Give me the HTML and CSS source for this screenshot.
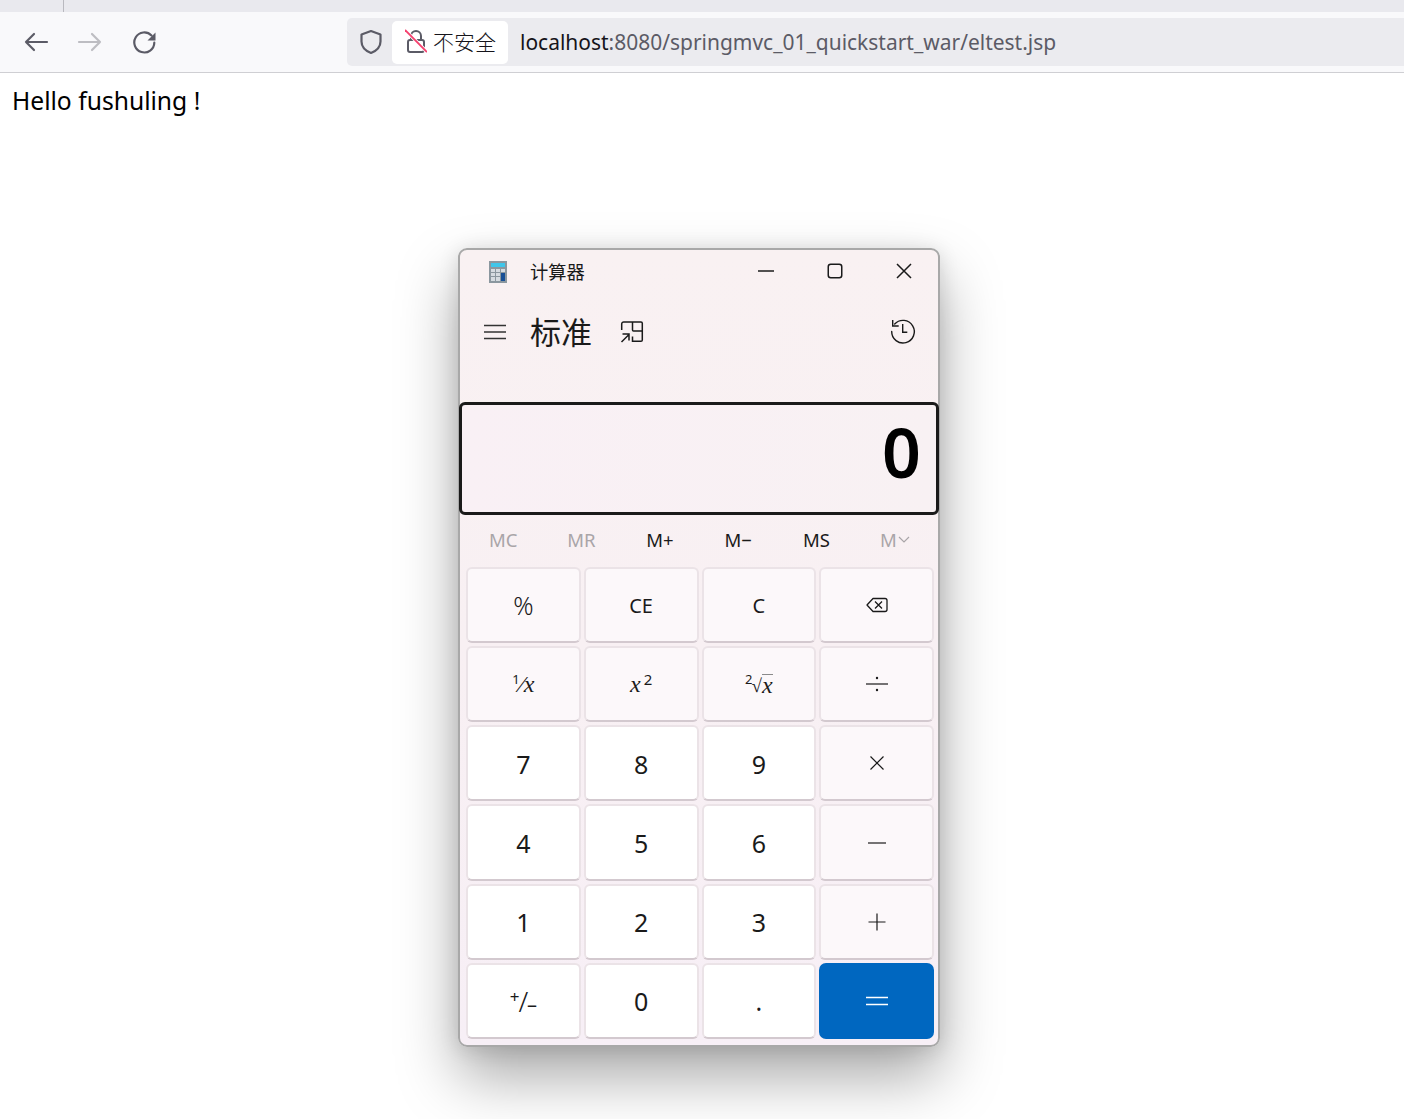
FILE: index.html
```html
<!DOCTYPE html>
<html lang="zh-CN">
<head>
<meta charset="utf-8">
<title>eltest</title>
<link rel="stylesheet" href="styles.css">
</head>
<body>
<div class="tabstrip"><span class="tabsep"></span></div>
<header class="toolbar">
  <nav class="nav">
    <svg class="navicon" viewBox="0 0 26 24"><path d="M24 12H3M11 4l-8 8 8 8" fill="none" stroke="#5b5b66" stroke-width="2.2" stroke-linecap="round" stroke-linejoin="round"/></svg>
    <svg class="navicon" viewBox="0 0 26 24"><path d="M2 12h21M15 4l8 8-8 8" fill="none" stroke="#bdbdc2" stroke-width="2.2" stroke-linecap="round" stroke-linejoin="round"/></svg>
    <svg class="navicon" viewBox="-1 0 26 24"><path d="M19.500 5.500A10 10 0 1 0 22.300 12.700" fill="none" stroke="#5b5b66" stroke-width="2.200" stroke-linecap="round"/><path d="M23.500 2.500V10.500H15.500z" fill="#5b5b66"/></svg>
  </nav>
  <div class="urlbar">
    <svg class="shield" viewBox="0 0 24 26"><path d="M12 2l9.500 3.500v7c0 6-4.500 9.500-9.500 11.500-5-2-9.500-5.500-9.500-11.500v-7z" fill="none" stroke="#5b5b66" stroke-width="2.200" stroke-linejoin="round"/></svg>
    <div class="security">
      <svg class="lock" viewBox="0 0 22 24"><path d="M6 11V7a5 5 0 0 1 10 0v4" fill="none" stroke="#5b5b66" stroke-width="2"/><rect x="3" y="11" width="16" height="12" rx="2" fill="none" stroke="#5b5b66" stroke-width="2"/><path d="M0 1l22 22" stroke="#fff" stroke-width="3.500"/><path d="M0 1l22 22" stroke="#f5406e" stroke-width="1.800"/></svg>
      <span class="sectext">不安全</span>
    </div>
    <div class="url"><span class="host">localhost</span>:8080/springmvc_01_quickstart_war/eltest.jsp</div>
  </div>
</header>
<main class="page">Hello fushuling !</main>

<section class="calc">
  <div class="titlebar">
    <svg class="appicon" viewBox="0 0 18 22">
      <rect width="18" height="22" fill="#8b979f"/><rect x="2" y="2" width="14" height="4" fill="#3fc6ea"/>
      <g fill="#d5dbe0"><rect x="2" y="8" width="4" height="3"/><rect x="7" y="8" width="4" height="3"/><rect x="12" y="8" width="4" height="3"/><rect x="2" y="12" width="4" height="3"/><rect x="7" y="12" width="4" height="3"/><rect x="2" y="16" width="4" height="4"/><rect x="7" y="16" width="4" height="4"/></g>
      <rect x="12" y="12" width="4" height="8" fill="#174f96"/>
    </svg>
    <span class="apptitle">计算器</span>
    <div class="winctl">
      <svg viewBox="0 0 16 16"><path d="M0 8h16" stroke="#1a1a1a" stroke-width="1.500"/></svg>
      <svg viewBox="0 0 16 16"><rect x="1.250" y="1.250" width="13.500" height="13.500" rx="2.500" fill="none" stroke="#1a1a1a" stroke-width="1.500"/></svg>
      <svg viewBox="0 0 16 16"><path d="M1 1l14 14M15 1L1 15" stroke="#1a1a1a" stroke-width="1.500"/></svg>
    </div>
  </div>
  <div class="modebar">
    <svg class="hamburger" viewBox="0 0 22 16"><path d="M0 1.500h22M0 8h22M0 14.500h22" stroke="#333" stroke-width="1.300"/></svg>
    <h1 class="mode">标准</h1>
    <svg class="keeptop" viewBox="0 0 24 22">
      <path d="M1.700 9V3a2 2 0 0 1 2-2H21a1.300 1.300 0 0 1 1.300 1.300V19a1.300 1.300 0 0 1-1.300 1.300H12.500V15.500" fill="none" stroke="#1a1a1a" stroke-width="1.500"/>
      <path d="M12.500 1v8a1 1 0 0 0 1 1h8.800" fill="none" stroke="#1a1a1a" stroke-width="1.500"/>
      <path d="M1.500 21l7.500-7.500M2.500 13H9v6.500" fill="none" stroke="#1a1a1a" stroke-width="1.500"/>
    </svg>
    <svg class="history" viewBox="0 0 24 24">
      <path d="M3.700 4A11.300 11.300 0 1 1 .7 11.500" fill="none" stroke="#1a1a1a" stroke-width="1.400" stroke-linecap="round"/>
      <path d="M1.700 0v6h6M11.700 4v8.300h4.600" fill="none" stroke="#1a1a1a" stroke-width="1.400"/>
    </svg>
  </div>
  <div class="display">0</div>
  <div class="memory">
    <span class="off">MC</span><span class="off">MR</span><span>M+</span><span>M−</span><span>MS</span>
    <span class="off">M<svg class="chev" viewBox="0 0 12 7"><path d="M1 1l5 5 5-5" fill="none" stroke="#a9a5a8" stroke-width="1.200"/></svg></span>
  </div>
  <div class="keys">
    <button class="key fn pct">%</button>
    <button class="key fn small">CE</button>
    <button class="key fn small">C</button>
    <button class="key fn"><svg class="glyph" viewBox="0 0 22 16"><path d="M7 1.500h12a2 2 0 0 1 2 2v9a2 2 0 0 1-2 2H7L1 8z" fill="none" stroke="#1a1a1a" stroke-width="1.300" stroke-linejoin="round"/><path d="M9 4.500l7 7M16 4.500l-7 7" stroke="#1a1a1a" stroke-width="1.300"/></svg></button>

    <button class="key fn math"><sup class="s1">1</sup>⁄<i>x</i></button>
    <button class="key fn math"><i>x</i><sup class="s2">2</sup></button>
    <button class="key fn math"><sup class="s1 root-index">2</sup><span class="radical">√</span><i class="over">x</i></button>
    <button class="key fn"><svg class="glyph" viewBox="0 0 22 16"><path d="M0 8h22" stroke="#1a1a1a" stroke-width="1.200"/><circle cx="11" cy="2" r="1.200" fill="#1a1a1a"/><circle cx="11" cy="14" r="1.200" fill="#1a1a1a"/></svg></button>

    <button class="key num">7</button>
    <button class="key num">8</button>
    <button class="key num">9</button>
    <button class="key fn"><svg class="glyph" viewBox="0 0 22 16"><path d="M4.500 1.500l13 13M17.500 1.500l-13 13" stroke="#1a1a1a" stroke-width="1.200"/></svg></button>

    <button class="key num">4</button>
    <button class="key num">5</button>
    <button class="key num">6</button>
    <button class="key fn"><svg class="glyph" viewBox="0 0 22 16"><path d="M2 8h18" stroke="#1a1a1a" stroke-width="1.200"/></svg></button>

    <button class="key num">1</button>
    <button class="key num">2</button>
    <button class="key num">3</button>
    <button class="key fn"><svg class="glyph tall" viewBox="0 0 22 22"><path d="M2.500 11h17M11 2.500v17" stroke="#1a1a1a" stroke-width="1.200"/></svg></button>

    <button class="key num sign"><span class="plus">+</span><span class="slash">/</span><span class="minus">–</span></button>
    <button class="key num">0</button>
    <button class="key num">.</button>
    <button class="key equals"><svg class="glyph" viewBox="0 0 22 16"><path d="M0 4.500h22M0 11.500h22" stroke="#fff" stroke-width="1.500"/></svg></button>
  </div>
</section>
</body>
</html>
```
FILE: styles.css
```css
* { box-sizing: border-box; }
html, body { margin: 0; padding: 0; }
body {
  height: 1119px;
  overflow: hidden;
  background: #fff;
  color: #000;
  font-family: "Noto Sans", "Noto Sans CJK SC", sans-serif;
  position: relative;
}
svg { display: block; flex: none; }

.tabstrip { height: 12px; background: #e9e9ee; padding-left: 63px; }
.tabsep { display: block; width: 1px; height: 12px; background: #b9b9bf; }

.toolbar {
  height: 61px;
  background: #f9f9fb;
  border-bottom: 1px solid #cfcfd3;
  display: flex;
  align-items: center;
  padding-left: 23px;
}
.nav { display: flex; align-items: center; gap: 28px; width: 324px; }
.navicon { width: 26px; height: 24px; }
.urlbar {
  flex: 1;
  height: 48px;
  background: #ebebef;
  border-radius: 5px 0 0 5px;
  display: flex;
  align-items: center;
  padding-left: 12px;
  margin-top: -1px;
}
.shield { width: 24px; height: 26px; margin-right: 9px; }
.security {
  width: 116px;
  height: 43px;
  margin-top: 1px;
  background: #fff;
  border-radius: 5px;
  display: flex;
  align-items: center;
  padding-left: 13px;
  gap: 6px;
  font: 300 21px/1 "Noto Sans CJK SC", sans-serif;
  color: #15141a;
}
.lock { width: 22px; height: 24px; margin-top: -2px; }
.sectext { margin-top: -2px; }
.url {
  margin-left: 12px;
  font-size: 20.970px;
  color: #5b5b66;
  white-space: nowrap;
}
.host { color: #15141a; }

.page { padding: 11px 12px 0; font-size: 24.650px; line-height: 34px; }

.calc {
  position: absolute;
  left: 458px;
  top: 248px;
  width: 482px;
  height: 799px;
  border: 2px solid #a8a8a8;
  border-radius: 9px;
  background: linear-gradient(180deg, #f9f1f2 0%, #f8f0f3 50%, #f7eff6 100%);
  box-shadow: 0 30px 60px rgba(0, 0, 0, .34), 0 2px 20px rgba(0, 0, 0, .12);
  display: flex;
  flex-direction: column;
  color: #1a1a1a;
}
.titlebar {
  height: 44px;
  display: flex;
  align-items: center;
  padding-left: 29px;
}
.appicon { width: 18px; height: 22px; }
.apptitle { margin: -2px 0 0 23px; font: 18.300px/1 "Noto Sans CJK SC", sans-serif; }
.winctl {
  margin-left: auto;
  display: flex;
  gap: 53px;
  padding-right: 26px;
  margin-top: -3px;
}
.winctl svg { width: 16px; height: 16px; }

.modebar {
  height: 76px;
  display: flex;
  align-items: center;
  padding-left: 24px;
}
.hamburger { width: 22px; height: 16px; margin-right: 24px; }
.mode {
  margin: -4px 28px 0 0;
  font: 400 31px/1 "Noto Sans CJK SC", sans-serif;
}
.keeptop { width: 24px; height: 22px; margin-top: -1px; }
.history { width: 24px; height: 24px; margin-left: auto; margin-right: 23px; overflow: visible; }

.display {
  height: 113px;
  margin: 32px -1px 0;
  border: 3px solid #1a1a1a;
  border-radius: 6px;
  background: linear-gradient(90deg, #f9f0f5, #f8f1f3);
  text-align: right;
  padding-right: 15px;
  font-size: 68px;
  font-weight: 600;
  line-height: 94px;
  color: #000;
}

.memory {
  margin: 0 4px;
  height: 52px;
  padding-bottom: 3px;
  display: grid;
  grid-template-columns: repeat(6, 1fr);
  align-items: center;
  justify-items: center;
  font-size: 18.500px;
}
.memory span { display: flex; align-items: center; }
.memory .off { color: #a9a5a8; }
.chev { width: 12px; height: 7px; margin-left: 1px; }

.keys {
  flex: 1;
  margin: 0 4px 6px 6px;
  display: grid;
  grid-template-columns: repeat(4, 1fr);
  grid-template-rows: repeat(6, 1fr);
  gap: 3px;
}
.key {
  border: 2px solid #ebe3e7;
  border-bottom-color: #d3c9cf;
  border-radius: 6px;
  padding: 1px 0 0;
  font-family: inherit;
  font-size: 25px;
  color: #1a1a1a;
  display: flex;
  align-items: center;
  justify-content: center;
}
.fn { background: #fcf8fa; }
.num { background: #fff; }
.small { font-size: 20px; }
.pct { font-weight: 300; padding-top: 0; }
.glyph { width: 22px; height: 16px; margin-top: -1px; }
.glyph.tall { height: 22px; }
.equals {
  background: #0067c0;
  border: 0;
  border-radius: 7px;
}
.math { font-family: "Liberation Serif", serif; font-size: 24px; }
.math i { font-style: italic; }
.math sup { font-family: "Noto Sans", sans-serif; vertical-align: baseline; line-height: 1; margin-bottom: 10px; }
.s1 { font-size: 13px; }
.s2 { margin-left: 3px; font-size: 15px; }
.root-index { margin-right: -1px; }
.radical { font-size: 19px; margin-top: 2px; line-height: 20px; }
.over { border-top: 1px solid #8a8a8a; line-height: 20px; margin-top: -1px; }
.sign { font-size: 23px; font-family: "Noto Sans", sans-serif; }
.plus { font-size: 17px; margin-top: -10px; margin-right: -1px; }
.slash { font-size: 28px; font-weight: 300; line-height: 30px; }
.minus { font-size: 20px; margin-top: 7px; margin-left: -1px; }
```
